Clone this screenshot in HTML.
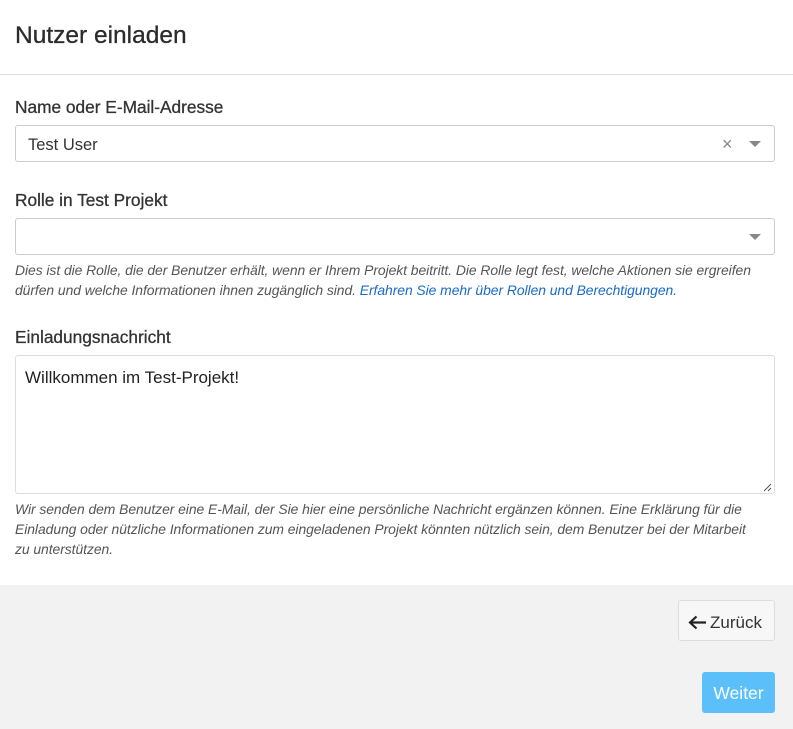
<!DOCTYPE html>
<html><head><meta charset="utf-8"><style>
*{margin:0;padding:0;box-sizing:border-box}
body{width:793px;height:729px;background:#fff;font-family:"Liberation Sans",sans-serif;color:#333;position:relative;overflow:hidden}
.a{position:absolute;white-space:nowrap}
.h{left:15px;top:22px;font-size:24.5px;color:#2b2b2b;-webkit-text-stroke:0.3px #2b2b2b}
.hr{position:absolute;left:0;top:74px;width:793px;height:1px;background:#ddd}
.lbl{font-size:17.3px;color:#333;left:15px;-webkit-text-stroke:0.3px #333}
.box{position:absolute;left:15px;width:760px;border:1px solid #ccc;border-radius:3px;background:#fff}
.help{font-size:13.9px;font-style:italic;color:#555;left:15px;letter-spacing:-0.05px}
.car{position:absolute;width:0;height:0;border-left:6px solid transparent;border-right:6px solid transparent;border-top:6px solid #888}
a{color:#1a6bc7;text-decoration:none}
.foot{position:absolute;left:0;top:585px;width:793px;height:144px;background:#f2f2f2}
</style></head><body>
<div class="a h">Nutzer einladen</div>
<div class="hr"></div>
<div class="a lbl" style="top:97px">Name oder E-Mail-Adresse</div>
<div class="box" style="top:125px;height:37px"></div>
<div class="a" style="left:28px;top:136px;font-size:16.5px;color:#333">Test User</div>
<div class="a" style="left:722px;top:134px;font-size:18px;color:#888">×</div>
<div class="car" style="left:749px;top:141px"></div>
<div class="a lbl" style="top:190px">Rolle in Test Projekt</div>
<div class="box" style="top:218px;height:37px"></div>
<div class="car" style="left:749px;top:234px"></div>
<div class="a help" style="top:262px">Dies ist die Rolle, die der Benutzer erhält, wenn er Ihrem Projekt beitritt. Die Rolle legt fest, welche Aktionen sie ergreifen</div>
<div class="a help" style="top:282px">dürfen und welche Informationen ihnen zugänglich sind. <a>Erfahren Sie mehr über Rollen und Berechtigungen.</a></div>
<div class="a lbl" style="top:327px">Einladungsnachricht</div>
<div class="box" style="top:355px;height:139px;border-color:#ddd"></div>
<div class="a" style="left:25px;top:368px;font-size:17px;color:#222">Willkommen im Test-Projekt!</div>
<svg class="a" style="left:763px;top:483px" width="9" height="9"><path d="M1 8L8 1M5 8L8 5" stroke="#555" stroke-width="1"/></svg>
<div class="a help" style="top:501px">Wir senden dem Benutzer eine E-Mail, der Sie hier eine persönliche Nachricht ergänzen können. Eine Erklärung für die</div>
<div class="a help" style="top:521px">Einladung oder nützliche Informationen zum eingeladenen Projekt könnten nützlich sein, dem Benutzer bei der Mitarbeit</div>
<div class="a help" style="top:541px">zu unterstützen.</div>
<div class="foot"></div>
<div class="a" style="left:678px;top:600px;width:97px;height:41px;border:1px solid #ddd;border-radius:3px;background:#f7f7f7"></div>
<svg class="a" style="left:688px;top:615px" width="19" height="15"><path d="M18 7.5H3M8.5 1.5L2 7.5l6.5 6" stroke="#222" stroke-width="2.2" fill="none"/></svg>
<div class="a" style="left:710px;top:613px;font-size:17px;color:#333">Zurück</div>
<div class="a" style="left:702px;top:672px;width:73px;height:41px;border-radius:3px;background:#5bc0fa;color:#fff;font-size:17.5px;text-align:center;line-height:43px">Weiter</div>
</body></html>
